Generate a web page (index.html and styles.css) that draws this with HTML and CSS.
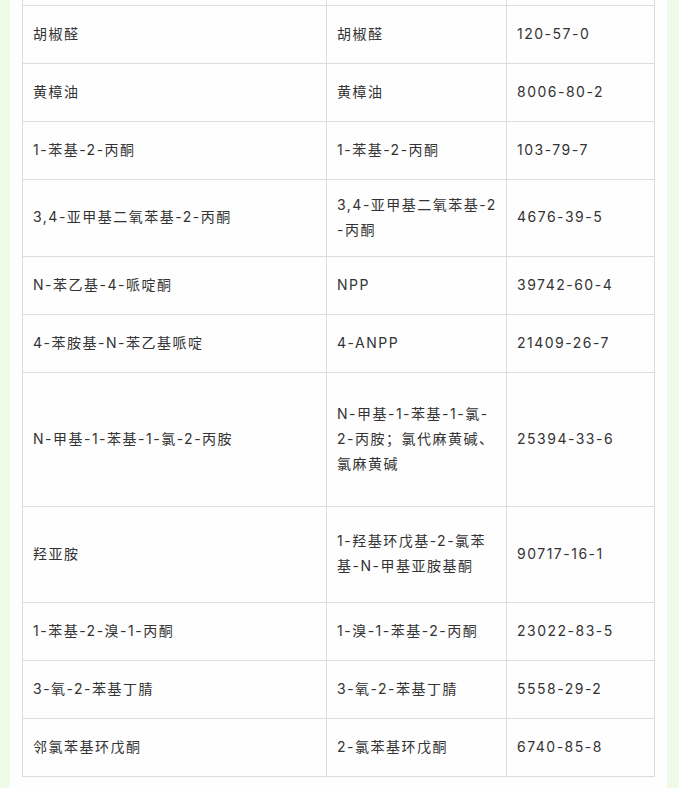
FILE: index.html
```html
<!DOCTYPE html>
<html lang="zh-CN">
<head>
<meta charset="utf-8">
<link rel="stylesheet" href="styles.css">
</head>
<body>
<div class="page">
<table class="list">
<colgroup><col class="c1"><col class="c2"><col class="c3"></colgroup>
<tbody>
<tr class="stub"><td></td><td></td><td></td></tr>
<tr class="h1"><td>胡椒醛</td><td>胡椒醛</td><td>120-57-0</td></tr>
<tr class="h1"><td>黄樟油</td><td>黄樟油</td><td>8006-80-2</td></tr>
<tr class="h1"><td>1-苯基-2-丙酮</td><td>1-苯基-2-丙酮</td><td>103-79-7</td></tr>
<tr class="h2"><td>3,4-亚甲基二氧苯基-2-丙酮</td><td>3,4-亚甲基二氧苯基-2<br>-丙酮</td><td>4676-39-5</td></tr>
<tr class="h1"><td>N-苯乙基-4-哌啶酮</td><td>NPP</td><td>39742-60-4</td></tr>
<tr class="h1"><td>4-苯胺基-N-苯乙基哌啶</td><td>4-ANPP</td><td>21409-26-7</td></tr>
<tr class="h3"><td>N-甲基-1-苯基-1-氯-2-丙胺</td><td>N-甲基-1-苯基-1-氯-<br>2-丙胺；氯代麻黄碱、<br>氯麻黄碱</td><td>25394-33-6</td></tr>
<tr class="h4"><td>羟亚胺</td><td>1-羟基环戊基-2-氯苯<br>基-N-甲基亚胺基酮</td><td>90717-16-1</td></tr>
<tr class="h1"><td>1-苯基-2-溴-1-丙酮</td><td>1-溴-1-苯基-2-丙酮</td><td>23022-83-5</td></tr>
<tr class="h1"><td>3-氧-2-苯基丁腈</td><td>3-氧-2-苯基丁腈</td><td>5558-29-2</td></tr>
<tr class="h1"><td>邻氯苯基环戊酮</td><td>2-氯苯基环戊酮</td><td>6740-85-8</td></tr>
</tbody>
</table>
</div>
</body>
</html>
```
FILE: styles.css
```css
html, body {
  margin: 0;
  padding: 0;
  background: #effbe8;
}
.page {
  width: 657px;
  margin-left: 10px;
  background: #fefefe;
  padding: 0 13px 11px 12px;
  box-sizing: border-box;
  min-height: 788px;
}
.list {
  width: 632px;
  table-layout: fixed;
  border-collapse: collapse;
  font-family: "Inter", "Noto Sans CJK SC", sans-serif;
  font-size: 14px;
  line-height: 25px;
  letter-spacing: 1.5px;
  color: #333;
}
.c1 { width: 304px; }
.c2 { width: 180px; }
.c3 { width: 148px; }
.list td {
  border: 1px solid #dcdcdc;
  padding: 0 10px 2px;
  vertical-align: middle;
  white-space: nowrap;
  overflow: visible;
}
.list tr.stub td {
  border-top: none;
  padding: 0;
}
.stub { height: 5px; }
.h1 { height: 58px; }
.h2 { height: 77px; }
.h3 { height: 134px; }
.h4 { height: 96px; }
```
